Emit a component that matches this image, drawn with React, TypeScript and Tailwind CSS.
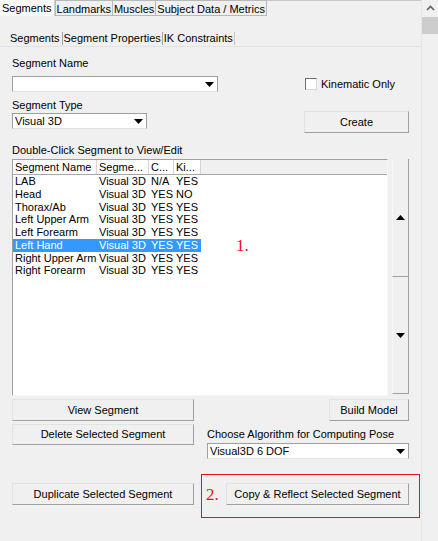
import React from "react";

const ROWS = [
  ["LAB", "Visual 3D", "N/A", "YES"],
  ["Head", "Visual 3D", "YES", "NO"],
  ["Thorax/Ab", "Visual 3D", "YES", "YES"],
  ["Left Upper Arm", "Visual 3D", "YES", "YES"],
  ["Left Forearm", "Visual 3D", "YES", "YES"],
  ["Left Hand", "Visual 3D", "YES", "YES"],
  ["Right Upper Arm", "Visual 3D", "YES", "YES"],
  ["Right Forearm", "Visual 3D", "YES", "YES"],
];

const COLS = [
  { label: "Segment Name", w: "w-[84px]" },
  { label: "Segme...", w: "w-[52px]" },
  { label: "C...", w: "w-[25px]" },
  { label: "Ki...", w: "w-[27px]" },
];

const SELECTED = 5;

const Btn = ({ label, className = "" }: { label: string; className?: string }) => (
  <button
    className={`shrink-0 bg-[#f0f0f0] border border-t-[#e3e3e3] border-l-[#e3e3e3] border-b-[#a0a0a0] border-r-[#a0a0a0] text-[11px] text-black flex items-center justify-center ${className}`}
  >
    {label}
  </button>
);

const Arrow = ({ up = false }: { up?: boolean }) => (
  <svg width="9" height="5" viewBox="0 0 9 5">
    {up ? <polygon points="0,5 9,5 4.5,0" fill="#000" /> : <polygon points="0,0 9,0 4.5,5" fill="#000" />}
  </svg>
);

const Combo = ({ value, className = "" }: { value: string; className?: string }) => (
  <div
    className={`shrink-0 h-[16px] bg-white border border-t-[#a0a0a0] border-l-[#a0a0a0] border-b-[#e3e3e3] border-r-[#a0a0a0] flex items-center ${className}`}
  >
    <span className="flex-1 pl-[2px] text-[11px] leading-[13px] text-black truncate">{value}</span>
    <span className="w-[16px] h-full flex items-center justify-center">
      <Arrow />
    </span>
  </div>
);

export default function App() {
  return (
    <div
      className="w-[438px] h-[541px] flex bg-[#f0f0f0] overflow-hidden text-black"
      style={{ fontFamily: '"Liberation Sans", Arial, sans-serif' }}
    >
      {/* Main panel */}
      <div className="w-[421px] shrink-0 flex flex-col border-t border-[#c8c8c8]">
        {/* Outer tabs */}
        <div className="flex h-[16px] -mt-px text-[11px] leading-[14px]">
          <div className="px-[2px] bg-[#fafafa] border-r border-[#d0d0d0] pt-[1px]">Segments</div>
          <div className="px-[1px] border border-[#b8b8b8] pt-[1px]">Landmarks</div>
          <div className="px-[1px] border border-l-0 border-[#b8b8b8] pt-[1px]">Muscles</div>
          <div className="px-[1px] border border-l-0 border-[#b8b8b8] pt-[1px]">Subject Data / Metrics</div>
        </div>

        {/* Inner tabs */}
        <div className="mt-[16px] h-[15px] flex items-end border-b border-[#e2e2e2] text-[11px] leading-[13px]">
          <div className="pl-[10px] pr-[2px] border-r border-[#a0a0a0] h-[13px] mb-px">Segments</div>
          <div className="px-[1px] border-r border-[#a0a0a0] h-[13px] mb-px">Segment Properties</div>
          <div className="px-[1px] border-r border-[#c8c8c8] h-[13px] mb-px">IK Constraints</div>
        </div>

        <div className="ml-[12px] w-[397px] flex flex-col text-[11px] leading-[13px]">
          <div className="mt-[10px] h-[13px]">Segment Name</div>
          <div className="mt-[6px] flex items-center">
            <Combo value="" className="w-[206px]" />
            <div className="ml-auto w-[105px] flex items-center pl-[1px]">
              <span className="w-[12px] h-[12px] bg-white border border-t-[#6e6e6e] border-l-[#6e6e6e] border-b-[#d8d8d8] border-r-[#d8d8d8]" />
              <span className="ml-[4px]">Kinematic Only</span>
            </div>
          </div>

          <div className="mt-[7px] h-[13px]">Segment Type</div>
          <div className="flex items-start">
            <Combo value="Visual 3D" className="w-[135px] mt-[1px]" />
            <Btn label="Create" className="ml-auto w-[105px] h-[22px] -mt-[1px]" />
          </div>

          <div className="mt-[11px] h-[13px]">Double-Click Segment to View/Edit</div>

          {/* List + spinner */}
          <div className="mt-[2px] flex h-[237px]">
            <div className="w-[376px] h-full bg-white border border-t-[#a0a0a0] border-l-[#a0a0a0] border-r-[#f7f7f7] border-b-[#f7f7f7] flex flex-col">
              <div className="flex h-[15px] border-b border-[#a8a8a8] shrink-0">
                {COLS.map((c) => (
                  <div key={c.label} className={`${c.w} shrink-0 bg-white border-r border-[#d5d5d5] pl-[2px] leading-[14px] truncate`}>
                    {c.label}
                  </div>
                ))}
                <div className="flex-1 bg-[#f0f0f0]" />
              </div>
              {ROWS.map((r, i) => (
                <div
                  key={r[0]}
                  className={`flex h-[12.75px] leading-[12.75px] w-[188px] ${i === SELECTED ? "bg-[#3399ff] text-white" : ""}`}
                >
                  {r.map((cell, j) => (
                    <div key={j} className={`${COLS[j].w} shrink-0 pl-[2px] whitespace-nowrap overflow-visible`}>
                      {cell}
                    </div>
                  ))}
                </div>
              ))}
            </div>
            <div className="ml-[4px] w-[17px] h-[235px] flex flex-col">
              <div className="h-[118px] border-l border-[#f8f8f8] border-r border-b border-r-[#a0a0a0] border-b-[#a0a0a0] flex items-center justify-center">
                <Arrow up />
              </div>
              <div className="flex-1 border-l border-[#f8f8f8] border-r border-b border-r-[#a0a0a0] border-b-[#a0a0a0] flex items-center justify-center">
                <Arrow />
              </div>
            </div>
          </div>

          {/* Row: view / build */}
          <div className="mt-[3px] flex">
            <Btn label="View Segment" className="w-[182px] h-[22px]" />
            <Btn label="Build Model" className="ml-auto w-[80px] h-[22px]" />
          </div>

          {/* Row: delete / algorithm */}
          <div className="mt-[3px] flex items-start">
            <Btn label="Delete Selected Segment" className="w-[182px] h-[21px]" />
            <div className="ml-[13px] flex-1 flex flex-col pt-[4px]">
              <div className="h-[13px]">Choose Algorithm for Computing Pose</div>
              <Combo value="Visual3D 6 DOF" className="w-[202px] mt-[2px]" />
            </div>
          </div>

          {/* Row: duplicate / copy & reflect */}
          <div className="mt-[15px] flex items-start">
            <Btn label="Duplicate Selected Segment" className="w-[182px] h-[22px] mt-[9px]" />
            <div className="ml-[7px] shrink-0 w-[219px] h-[44px] border border-[#e81123] flex items-start pl-[4px]">
              <span
                className="mt-[11px] w-[20px] text-[17px] leading-[18px] text-[#e81123]"
                style={{ fontFamily: '"Liberation Serif", "Times New Roman", serif' }}
              >
                2.
              </span>
              <Btn label="Copy & Reflect Selected Segment" className="w-[183px] h-[22px] mt-[8px]" />
            </div>
          </div>
        </div>
      </div>

      {/* Window scrollbar */}
      <div className="w-[17px] shrink-0 h-full border-l border-[#e6e6e6] flex flex-col items-center">
        <svg className="mt-[5px]" width="9" height="6" viewBox="0 0 9 6">
          <polyline points="1,5 4.5,1.5 8,5" fill="none" stroke="#606060" strokeWidth="1.6" />
        </svg>
        <div className="mt-[6px] w-[16px] h-[17px] bg-[#cdcdcd]" />
      </div>

      {/* Annotation "1." beside the selected row */}
      <span
        className="absolute left-[236px] top-[237px] text-[17px] leading-[18px] text-[#e81123]"
        style={{ fontFamily: '"Liberation Serif", "Times New Roman", serif' }}
      >
        1.
      </span>
    </div>
  );
}
